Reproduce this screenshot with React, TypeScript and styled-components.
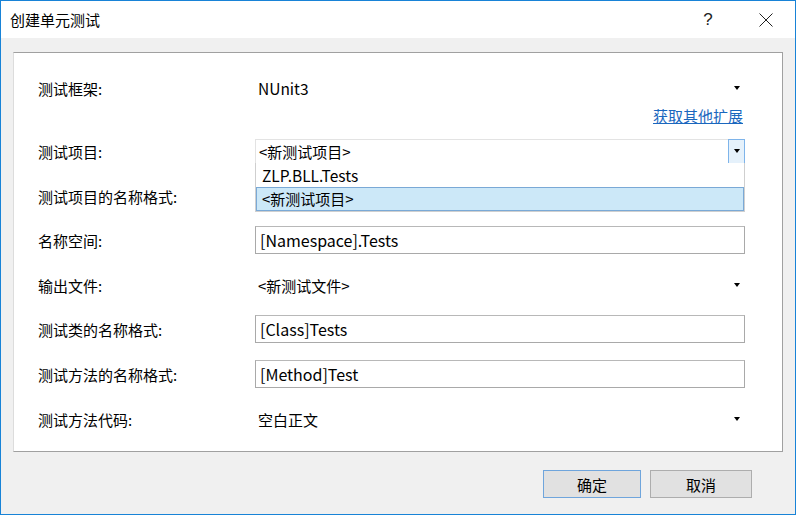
import React from 'react';
import styled, { createGlobalStyle } from 'styled-components';

const GlobalStyle = createGlobalStyle`
    html, body {
        margin: 0;
        padding: 0;
        background: #ffffff;
    }
    * {
        box-sizing: border-box;
    }
`;

const font = `"Microsoft YaHei", "Noto Sans CJK SC", sans-serif`;

const Window = styled.div`
    width: 796px;
    height: 515px;
    border: 1px solid #1883d7;
    background: #f0f0f0;
    display: flex;
    flex-direction: column;
    font-family: ${font};
    font-size: 15px;
    color: #000000;
`;

const TitleBar = styled.div`
    height: 37px;
    background: #ffffff;
    display: flex;
    align-items: center;
    padding-left: 9px;
    flex-shrink: 0;
`;

const Title = styled.div`
    flex: 1;
    font-size: 15px;
`;

const TitleButton = styled.div`
    width: 58px;
    height: 37px;
    display: flex;
    align-items: center;
    justify-content: center;
    font-size: 17px;
    font-family: "Liberation Sans", sans-serif;
    color: #222222;
`;

const Body = styled.div`
    flex: 1;
    padding: 14px 12px 0 12px;
    display: flex;
    flex-direction: column;
`;

const Panel = styled.div`
    height: 400px;
    background: #ffffff;
    border: 1px solid #a0a0a0;
    border-left-color: #dcdcdc;
    padding: 0 36px 0 24px;
    display: flex;
    flex-direction: column;
`;

const Row = styled.div<{ $top: number }>`
    display: grid;
    grid-template-columns: 217px 490px;
    align-items: center;
    height: 28px;
    margin-top: ${p => p.$top}px;
    position: relative;
`;

const Label = styled.div`
    font-size: 15px;
`;

const PlainCombo = styled.div`
    display: flex;
    align-items: center;
    justify-content: space-between;
    padding: 0 5px 0 3px;
    height: 24px;
`;

const Value = styled.span<{ $latin?: boolean }>`
    font-size: ${p => (p.$latin ? 15.5 : 15)}px;
`;

const Arrow = styled.span`
    width: 0;
    height: 0;
    border-left: 3.5px solid transparent;
    border-right: 3.5px solid transparent;
    border-top: 4px solid #000000;
`;

const TextBox = styled.div`
    height: 28px;
    border: 1px solid #a9a9a9;
    border-top-color: #b8b8b8;
    display: flex;
    align-items: center;
    padding-left: 4px;
    font-size: 16px;
`;

const LinkRow = styled.div`
    height: 20px;
    margin-top: 3px;
    display: flex;
    justify-content: flex-end;
    align-items: center;
    width: 705px;
`;

const Link = styled.a`
    color: #1a67be;
    text-decoration: underline;
    font-size: 15px;
    cursor: pointer;
`;

const OpenCombo = styled.div`
    height: 25px;
    border: 1px solid #e3e3e3;
    border-bottom-color: #a9a9a9;
    display: flex;
    align-items: center;
    padding-left: 3px;
    position: relative;
`;

const ComboText = styled.div`
    flex: 1;
    font-size: 15px;
`;

const ComboButton = styled.div`
    width: 17px;
    height: 25px;
    margin: -1px -1px -1px 0;
    border: 1px solid #7eb4ea;
    background: #e5f1fb;
    display: flex;
    align-items: center;
    justify-content: center;
`;

const DropList = styled.div`
    position: absolute;
    left: -1px;
    top: 100%;
    width: 490px;
    background: #ffffff;
    border: 1px solid #cfcfcf;
    border-top: none;
    z-index: 2;
`;

const DropItem = styled.div<{ $selected?: boolean }>`
    height: 24px;
    display: flex;
    align-items: center;
    padding-left: ${p => (p.$selected ? 5 : 5)}px;
    font-size: ${p => (p.$selected ? 15 : 15.5)}px;
    background: ${p => (p.$selected ? '#cce8f8' : '#ffffff')};
    border: 1px solid ${p => (p.$selected ? '#7aa9d6' : 'transparent')};
`;

const Footer = styled.div`
    flex: 1;
    display: flex;
    justify-content: flex-end;
    align-items: flex-start;
    padding: 18px 31px 0 0;
    gap: 9px;
`;

const Button = styled.button<{ $primary?: boolean }>`
    width: ${p => (p.$primary ? 98 : 102)}px;
    height: 28px;
    background: #e1e1e1;
    border: 1px solid ${p => (p.$primary ? '#6fa5dc' : '#adadad')};
    font-family: ${font};
    font-size: 15px;
    color: #000000;
    padding: 0;
`;

const CloseIcon = () => (
    <svg width="14" height="14" viewBox="0 0 14 14">
        <path d="M0.5 0.5 L13.5 13.5 M13.5 0.5 L0.5 13.5" stroke="#222" strokeWidth="1" fill="none" />
    </svg>
);

const App: React.FC = () => {
  return (
        <Window>
            <GlobalStyle />
            <TitleBar>
                <Title>创建单元测试</Title>
                <TitleButton>?</TitleButton>
                <TitleButton><CloseIcon /></TitleButton>
            </TitleBar>
            <Body>
                <Panel>
                    <Row $top={21}>
                        <Label>测试框架:</Label>
                        <PlainCombo><Value $latin>NUnit3</Value><Arrow /></PlainCombo>
                    </Row>
                    <LinkRow><Link>获取其他扩展</Link></LinkRow>
                    <Row $top={12}>
                        <Label>测试项目:</Label>
                        <OpenCombo>
                            <ComboText>&lt;新测试项目&gt;</ComboText>
                            <ComboButton><Arrow /></ComboButton>
                            <DropList>
                                <DropItem>ZLP.BLL.Tests</DropItem>
                                <DropItem $selected>&lt;新测试项目&gt;</DropItem>
                            </DropList>
                        </OpenCombo>
                    </Row>
                    <Row $top={17}>
                        <Label>测试项目的名称格式:</Label>
                        <div />
                    </Row>
                    <Row $top={16}>
                        <Label>名称空间:</Label>
                        <TextBox>[Namespace].Tests</TextBox>
                    </Row>
                    <Row $top={17}>
                        <Label>输出文件:</Label>
                        <PlainCombo><Value>&lt;新测试文件&gt;</Value><Arrow /></PlainCombo>
                    </Row>
                    <Row $top={16}>
                        <Label>测试类的名称格式:</Label>
                        <TextBox>[Class]Tests</TextBox>
                    </Row>
                    <Row $top={17}>
                        <Label>测试方法的名称格式:</Label>
                        <TextBox>[Method]Test</TextBox>
                    </Row>
                    <Row $top={17}>
                        <Label>测试方法代码:</Label>
                        <PlainCombo><Value>空白正文</Value><Arrow /></PlainCombo>
                    </Row>
                </Panel>
                <Footer>
                    <Button $primary>确定</Button>
                    <Button>取消</Button>
                </Footer>
            </Body>
        </Window>
  );
};

export default App;
